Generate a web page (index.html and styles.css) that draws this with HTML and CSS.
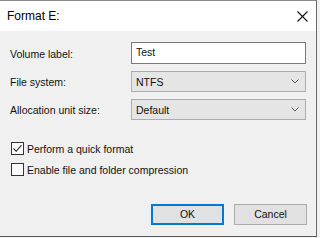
FILE: index.html
```html
<!DOCTYPE html>
<html lang="en">
<head>
    <meta charset="UTF-8">
    <title>Format E:</title>
    <link rel="stylesheet" href="styles.css">
</head>
<body>
    <div class="window">
        <!-- title bar -->
        <div class="titlebar">
            <span class="title">Format E:</span>
            <svg class="close" width="11" height="11" viewBox="0 0 11 11">
                <path d="M0.5 0.5 L10.5 10.5 M10.5 0.5 L0.5 10.5" stroke="#111" stroke-width="1.1" fill="none"/>
            </svg>
        </div>

        <div class="content">
            <div class="form">
                <label>Volume label:</label>
                <div class="textbox">Test</div>

                <label>File system:</label>
                <div class="select">
                    <span>NTFS</span>
                    <svg width="8" height="5" viewBox="0 0 8 5"><path d="M0.5 0.5 L4 4 L7.5 0.5" stroke="#555" fill="none"/></svg>
                </div>

                <label>Allocation unit size:</label>
                <div class="select">
                    <span>Default</span>
                    <svg width="8" height="5" viewBox="0 0 8 5"><path d="M0.5 0.5 L4 4 L7.5 0.5" stroke="#555" fill="none"/></svg>
                </div>
            </div>

            <div class="checks">
                <div class="check">
                    <span class="box">
                        <svg width="11" height="11" viewBox="0 0 11 11"><path d="M1.5 5.5 L4.2 8.3 L9.5 2.2" stroke="#222" stroke-width="1.1" fill="none"/></svg>
                    </span>
                    <span>Perform a quick format</span>
                </div>
                <div class="check">
                    <span class="box"></span>
                    <span>Enable file and folder compression</span>
                </div>
            </div>

            <div class="buttons">
                <div class="btn default">OK</div>
                <div class="btn">Cancel</div>
            </div>
        </div>
    </div>
</body>
</html>
```

FILE: styles.css
```css
body {
    margin: 0;
    background-color: #f2f2f2;
    font-family: "Liberation Sans", Arial, sans-serif;
    font-size: 10.5px;
    color: #111;
}
.window {
    width: 316px;
    height: 235px;
    border-top: 1px solid #8a8a8a;
    border-right: 1px solid #6a6a6a;
    border-bottom: 1px solid #555;
    background-color: #f0f0f0;
    display: flex;
    flex-direction: column;
}
.titlebar {
    height: 30px;
    background-color: #fff;
    display: flex;
    align-items: center;
    justify-content: space-between;
    padding: 0 8px 0 7px;
}
.title {
    font-size: 12px;
    color: #000;
}
.content {
    padding: 11px 9px 0 10px;
    display: flex;
    flex-direction: column;
}
.form {
    display: grid;
    grid-template-columns: 121px 175px;
    grid-template-rows: 22px 21px 21px;
    row-gap: 7px;
    align-items: center;
}
.form label {
    padding-top: 1px;
}
.textbox {
    height: 20px;
    border: 1px solid #7a7a7a;
    background-color: #fff;
    padding-left: 4px;
    line-height: 19px;
    box-sizing: content-box;
}
.select {
    height: 19px;
    border: 1px solid #adadad;
    background-color: #e5e5e5;
    display: flex;
    align-items: center;
    justify-content: space-between;
    padding: 0 6px 0 4px;
}
.checks {
    margin-top: 22px;
    display: flex;
    flex-direction: column;
    gap: 8px;
}
.check {
    display: flex;
    align-items: center;
    gap: 3px;
    padding-left: 1px;
}
.box {
    width: 11px;
    height: 11px;
    border: 1px solid #333;
    background-color: #fff;
    display: flex;
}
.buttons {
    margin-top: 28px;
    display: flex;
    justify-content: flex-end;
    gap: 10px;
}
.btn {
    width: 71px;
    height: 19px;
    border: 1px solid #adadad;
    background-color: #e1e1e1;
    text-align: center;
    line-height: 19px;
}
.btn.default {
    width: 69px;
    height: 17px;
    border: 2px solid #0078d7;
    line-height: 17px;
}
```
